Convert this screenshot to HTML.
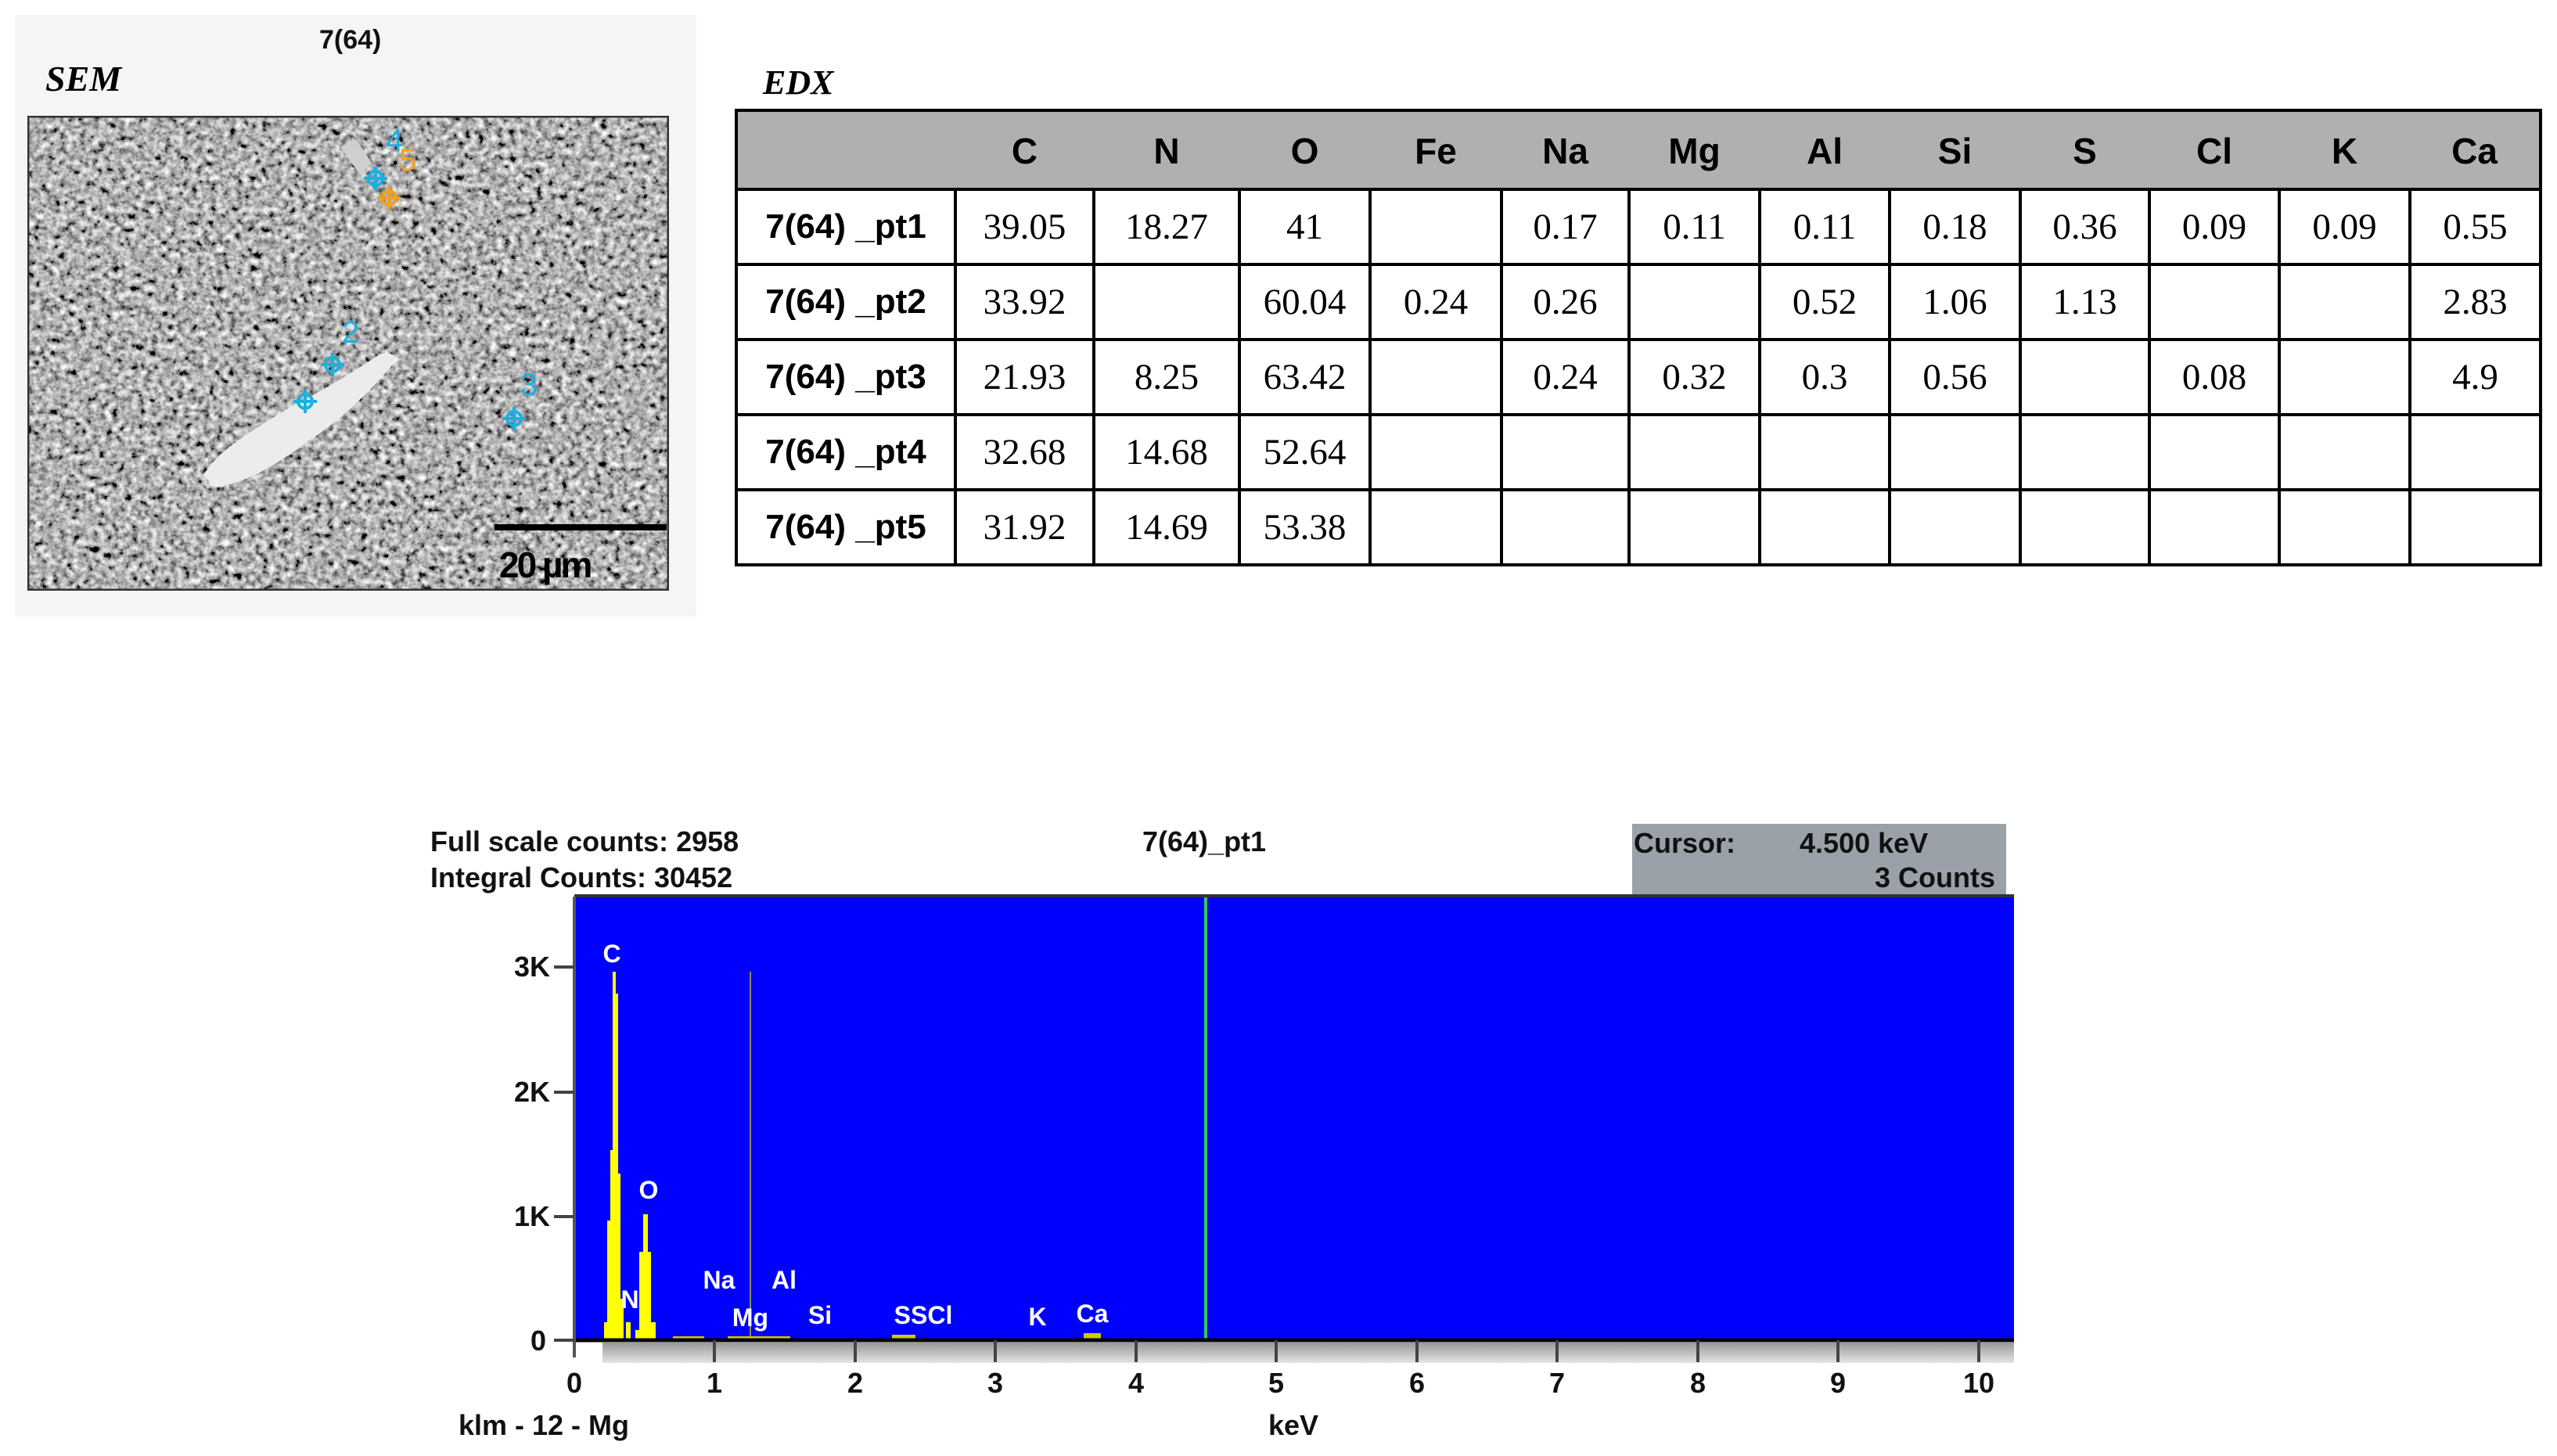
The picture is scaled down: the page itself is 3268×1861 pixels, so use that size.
<!DOCTYPE html>
<html><head><meta charset="utf-8"><style>
body{margin:0;width:3268px;height:1861px;background:#fff;position:relative;overflow:hidden;font-family:"Liberation Sans",sans-serif}
.a{position:absolute;white-space:nowrap}
table{position:absolute;left:939px;top:139px;border-collapse:collapse;table-layout:fixed}
td{border:4px solid #000;text-align:center;font-family:"Liberation Serif",serif;font-size:47px;height:92px;padding:0}
th{background:#b0b0b0;font-size:46px;font-weight:bold;height:92px;border-top:4px solid #000;border-bottom:4px solid #000;padding-top:4px}
th:first-child{border-left:4px solid #000}th:last-child{border-right:4px solid #000}
td.l{font-family:"Liberation Sans",sans-serif;font-weight:bold;font-size:44px}
.sp{font-family:"Liberation Sans Narrow","Liberation Sans",sans-serif;font-weight:bold;font-size:36px;color:#111}
</style></head><body>
<div class="a" style="left:19px;top:19px;width:871px;height:769px;background:#f5f5f5"></div>
<div class="a sp" style="left:408px;top:32px;font-size:34px">7(64)</div>
<div class="a" style="left:58px;top:74px;font-family:'Liberation Serif',serif;font-style:italic;font-weight:bold;font-size:46px">SEM</div>
<svg class="a" style="left:35px;top:148px" width="820" height="607" viewBox="0 0 820 607">
<defs><filter id="n" x="0" y="0" width="100%" height="100%"><feTurbulence type="fractalNoise" baseFrequency="0.12" numOctaves="3" seed="4"/><feColorMatrix type="matrix" values="0.33 0.33 0.33 0 0 0.33 0.33 0.33 0 0 0.33 0.33 0.33 0 0 0 0 0 0 1"/><feComponentTransfer><feFuncR type="linear" slope="2.6" intercept="-0.85"/><feFuncG type="linear" slope="2.6" intercept="-0.85"/><feFuncB type="linear" slope="2.6" intercept="-0.85"/></feComponentTransfer></filter></defs>
<rect width="820" height="607" fill="#777"/>
<rect width="820" height="607" filter="url(#n)"/>
<rect x="1" y="1" width="818" height="605" fill="none" stroke="#333" stroke-width="3"/>
<path d="M225 460 C240 430 290 400 340 370 C380 350 420 325 450 305 C470 300 475 310 465 320 C440 350 400 390 360 415 C320 445 280 470 240 475 Z" fill="#ececec"/>
<path d="M400 40 L420 30 L440 60 L425 75 Z" fill="#cfcfcf"/>
<g stroke="#1ab0e0" stroke-width="4" fill="none">
<circle cx="445" cy="80" r="9"/><path d="M445 65v30M430 80h30"/>
<circle cx="390" cy="318" r="9"/><path d="M390 303v30M375 318h30"/>
<circle cx="355" cy="365" r="9"/><path d="M355 350v30M340 365h30"/>
<circle cx="622" cy="387" r="9"/><path d="M622 372v30M607 387h30"/>
</g>
<g stroke="#f0a020" stroke-width="4" fill="none"><circle cx="462" cy="105" r="9"/><path d="M462 90v30M447 105h30"/></g>
<text x="458" y="45" fill="#1ab0e0" font-size="40" font-family="Liberation Sans Narrow,Liberation Sans,sans-serif">4</text>
<text x="475" y="70" fill="#f0a020" font-size="40" font-family="Liberation Sans Narrow,Liberation Sans,sans-serif">5</text>
<text x="402" y="290" fill="#1ab0e0" font-size="40" font-family="Liberation Sans Narrow,Liberation Sans,sans-serif">2</text>
<text x="630" y="357" fill="#1ab0e0" font-size="40" font-family="Liberation Sans Narrow,Liberation Sans,sans-serif">3</text>
<rect x="597" y="522" width="220" height="8" fill="#000"/>
<text x="603" y="590" fill="#000" font-size="46" font-weight="bold" font-family="Liberation Sans Narrow,Liberation Sans,sans-serif" letter-spacing="-3">20 µm</text>
</svg>
<div class="a" style="left:975px;top:80px;font-family:'Liberation Serif',serif;font-style:italic;font-weight:bold;font-size:44px">EDX</div>
<table>
<colgroup><col style="width:280px"><col style="width:177px"><col style="width:186px"><col style="width:167px"><col style="width:168px"><col style="width:163px"><col style="width:167px"><col style="width:166px"><col style="width:167px"><col style="width:165px"><col style="width:166px"><col style="width:167px"><col style="width:167px"></colgroup>
<tr><th></th><th>C</th><th>N</th><th>O</th><th>Fe</th><th>Na</th><th>Mg</th><th>Al</th><th>Si</th><th>S</th><th>Cl</th><th>K</th><th>Ca</th></tr>
<tr><td class="l">7(64) _pt1</td><td>39.05</td><td>18.27</td><td>41</td><td></td><td>0.17</td><td>0.11</td><td>0.11</td><td>0.18</td><td>0.36</td><td>0.09</td><td>0.09</td><td>0.55</td></tr>
<tr><td class="l">7(64) _pt2</td><td>33.92</td><td></td><td>60.04</td><td>0.24</td><td>0.26</td><td></td><td>0.52</td><td>1.06</td><td>1.13</td><td></td><td></td><td>2.83</td></tr>
<tr><td class="l">7(64) _pt3</td><td>21.93</td><td>8.25</td><td>63.42</td><td></td><td>0.24</td><td>0.32</td><td>0.3</td><td>0.56</td><td></td><td>0.08</td><td></td><td>4.9</td></tr>
<tr><td class="l">7(64) _pt4</td><td>32.68</td><td>14.68</td><td>52.64</td><td></td><td></td><td></td><td></td><td></td><td></td><td></td><td></td><td></td></tr>
<tr><td class="l">7(64) _pt5</td><td>31.92</td><td>14.69</td><td>53.38</td><td></td><td></td><td></td><td></td><td></td><td></td><td></td><td></td><td></td></tr>
</table>

<div class="a sp" style="left:550px;top:1055px">Full scale counts: 2958</div>
<div class="a sp" style="left:550px;top:1101px">Integral Counts: 30452</div>
<div class="a sp" style="left:1460px;top:1055px">7(64)_pt1</div>
<div class="a" style="left:2086px;top:1053px;width:478px;height:90px;background:#9ba1a8"></div>
<div class="a sp" style="left:2088px;top:1057px">Cursor:</div>
<div class="a sp" style="left:2300px;top:1057px">4.500 keV</div>
<div class="a sp" style="left:2380px;top:1101px;width:170px;text-align:right">3 Counts</div>
<svg class="a" style="left:0;top:0" width="3268" height="1861">
<defs><linearGradient id="g" x1="0" y1="0" x2="0" y2="1"><stop offset="0" stop-color="#999"/><stop offset="1" stop-color="#e4e4e4"/></linearGradient></defs>
<rect x="734" y="1146" width="1840" height="567" fill="#0000fe"/>
<rect x="734" y="1143" width="1840" height="4" fill="#333"/>
<rect x="770" y="1716" width="1804" height="26" fill="url(#g)"/>
<line x1="1541" y1="1147" x2="1541" y2="1713" stroke="#33cc55" stroke-width="4"/>
<line x1="959" y1="1242" x2="959" y2="1713" stroke="#8a8a50" stroke-width="2"/>
<path d="M772 1713 V1690 L776 1690 V1560 L780 1560 V1470 L783 1470 V1242 L787 1242 V1270 L790 1270 V1500 L793 1500 V1660 L797 1660 V1713 Z M800 1713 V1690 L806 1690 V1713Z M812 1713 V1700 L817 1700 V1600 L822 1600 V1552 L828 1552 V1600 L832 1600 V1690 L838 1690 V1713 Z" fill="#ffff00"/>
<g fill="#cccc00"><rect x="860" y="1708" width="40" height="4"/><rect x="930" y="1708" width="80" height="4"/><rect x="1140" y="1706" width="30" height="6"/><rect x="1385" y="1704" width="22" height="8"/></g>
<line x1="734" y1="1713" x2="2574" y2="1713" stroke="#000" stroke-width="5"/>
<line x1="734" y1="1146" x2="734" y2="1735" stroke="#555" stroke-width="4"/>
<g stroke="#444" stroke-width="4">
<line x1="708" y1="1236" x2="734" y2="1236"/><line x1="708" y1="1396" x2="734" y2="1396"/><line x1="708" y1="1555" x2="734" y2="1555"/><line x1="708" y1="1713" x2="734" y2="1713"/>
<path d="M913 1713v28M1093 1713v28M1272 1713v28M1452 1713v28M1631 1713v28M1811 1713v28M1990 1713v28M2170 1713v28M2349 1713v28M2529 1713v28"/>
</g>
<g font-family="Liberation Sans Narrow,Liberation Sans,sans-serif" font-weight="bold" font-size="36" fill="#111" text-anchor="middle">
<text x="680" y="1248">3K</text><text x="680" y="1408">2K</text><text x="680" y="1567">1K</text><text x="688" y="1726">0</text>
<text x="734" y="1780">0</text><text x="913" y="1780">1</text><text x="1093" y="1780">2</text><text x="1272" y="1780">3</text><text x="1452" y="1780">4</text><text x="1631" y="1780">5</text><text x="1811" y="1780">6</text><text x="1990" y="1780">7</text><text x="2170" y="1780">8</text><text x="2349" y="1780">9</text><text x="2529" y="1780">10</text>
<text x="695" y="1834">klm - 12 - Mg</text><text x="1653" y="1834">keV</text>
</g>
<g font-family="Liberation Sans,sans-serif" font-weight="bold" font-size="32" fill="#fff" text-anchor="middle">
<text x="782" y="1230">C</text><text x="829" y="1532">O</text><text x="805" y="1672">N</text><text x="919" y="1647">Na</text><text x="1002" y="1647">Al</text><text x="959" y="1695">Mg</text><text x="1048" y="1692">Si</text><text x="1180" y="1692">SSCl</text><text x="1326" y="1694">K</text><text x="1396" y="1690">Ca</text>
</g>
</svg>
</body></html>
